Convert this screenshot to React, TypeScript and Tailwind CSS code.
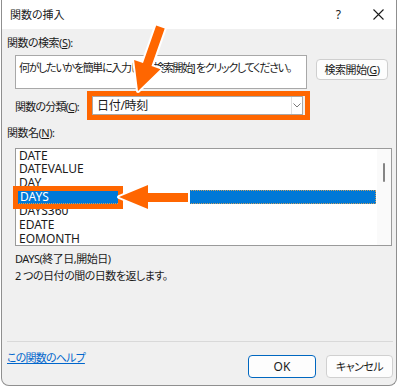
import React from "react";

const items = ["DATE", "DATEVALUE", "DAY", "DAYS", "DAYS360", "EDATE", "EOMONTH"];

export default function App() {
  return (
    <div className="relative w-[400px] h-[387px] bg-white overflow-hidden font-['Noto_Sans','Noto_Sans_CJK_JP',sans-serif] [font-feature-settings:'palt'] text-[11px] tracking-[-0.5px] text-[#1b1b1b]">
      <div className="ml-[1px] w-[396px] h-[386px] border-x border-b border-[#8f8f8f] rounded-b-[8px] bg-[#f0f0f0] flex flex-col overflow-hidden">
        {/* title bar */}
        <div className="h-[29px] bg-white flex items-center pl-[8px] pr-[8px] shrink-0">
          <span className="text-[11px] leading-[16px] tracking-normal">関数の挿入</span>
          <div className="ml-auto w-[20px] h-[20px] flex items-center justify-center text-[12px] leading-[16px]">?</div>
          <div className="ml-[20px] w-[20px] h-[20px] flex items-center justify-center">
            <svg width="11" height="11" viewBox="0 0 11 11">
              <path d="M0.5 0.5 L10.5 10.5 M10.5 0.5 L0.5 10.5" stroke="#1b1b1b" strokeWidth="1.1" fill="none" />
            </svg>
          </div>
        </div>
        {/* body */}
        <div className="flex flex-col pl-[5px] pr-[3px]">
          <div className="mt-[6px] leading-[16px]">
            関数の検索(<span className="underline">S</span>):
          </div>
          <div className="mt-[4px] flex items-start">
            <div className="ml-[8px] w-[292px] h-[34px] bg-white border border-[#a8a8a8] pl-[3px] pt-[4px] leading-[16px] whitespace-nowrap overflow-hidden tracking-[-1.3px]">
              何がしたいかを簡単に入力して、[検索開始] をクリックしてください。
            </div>
            <div className="ml-[9px] mt-[4px] w-[72px] h-[21px] bg-[#fdfdfd] border border-[#cfcfcf] rounded-[4px] flex items-center justify-center leading-[16px]">
              検索開始(<span className="underline">G</span>)
            </div>
          </div>
          <div className="mt-[7px] ml-[8px] h-[19px] flex items-center">
            <div className="w-[77px] leading-[16px] mt-[2px] whitespace-nowrap tracking-[-0.8px]">
              関数の分類(<span className="underline">C</span>):
            </div>
            <div className="w-[211px] h-[19px] bg-white border border-[#a8a8a8] flex items-center pl-[4px]">
              <span className="leading-[16px] text-[12px] tracking-[-0.3px]">日付/時刻</span>
              <div className="ml-auto h-full w-[11px] border-l border-[#e0e0e0] flex items-center justify-center">
                <svg width="8" height="5" viewBox="0 0 8 5">
                  <path d="M0.5 0.5 L4 4 L7.5 0.5" stroke="#7a7a7a" strokeWidth="1" fill="none" />
                </svg>
              </div>
            </div>
          </div>
          <div className="mt-[10px] leading-[16px]">
            関数名(<span className="underline">N</span>):
          </div>
          <div className="mt-[7px] ml-[8px] w-[377px] h-[98px] border border-[#9a9a9a] bg-white flex overflow-hidden text-[12px] tracking-normal">
            <div className="flex-1 flex flex-col">
              {items.map((it, i) =>
                it === "DAYS" ? (
                  <div key={it} className="mx-[1px] h-[14px] shrink-0 bg-[#0078d7] text-white pl-[2px] leading-[14px] border border-dotted border-[#c8a060]">
                    <span className="relative top-[-1px]">{it}</span>
                  </div>
                ) : (
                  <div key={it} className={`${i === 0 ? "h-[13px] leading-[13px]" : "h-[14px] leading-[14px]"} shrink-0 pl-[3px]`}>
                    {it}
                  </div>
                )
              )}
            </div>
            <div className="w-[14px] bg-[#fafafa] flex justify-center">
              <div className="mt-[14px] w-[2px] h-[19px] bg-[#858585] rounded-full" />
            </div>
          </div>
          <div className="mt-[4px] ml-[8px] leading-[17px]">DAYS(終了日,開始日)</div>
          <div className="ml-[8px] leading-[17px]">2 つの日付の間の日数を返します。</div>
          <div className="mt-[57px] h-px bg-[#d9d9d9]" />
          <div className="mt-[13px] flex items-start">
            <div className="mt-[-5px] leading-[16px] text-[#0066cc] underline tracking-[-0.8px]">この関数のヘルプ</div>
            <div className="ml-auto flex gap-[10px]">
              <div className="w-[68px] h-[23px] bg-[#fdfdfd] border border-[#0067c0] rounded-[4px] flex items-center justify-center leading-[16px] text-[12px] tracking-normal">
                OK
              </div>
              <div className="w-[67px] h-[23px] bg-[#fdfdfd] border border-[#d0d0d0] rounded-[4px] flex items-center justify-center leading-[16px]">
                キャンセル
              </div>
            </div>
          </div>
        </div>
      </div>
      {/* annotation overlay */}
      <svg className="absolute left-0 top-0 pointer-events-none" width="400" height="387" viewBox="0 0 400 387">
        <rect x="89.5" y="93.5" width="218" height="24" fill="none" stroke="#ff6600" strokeWidth="5" />
        <polygon
          points="138,91 160.5,69.2 151.5,66.1 164.7,28.5 156.2,25.5 143,63.1 134.1,60"
          fill="#ff6600"
          stroke="white"
          strokeWidth="4"
          strokeLinejoin="round"
          paintOrder="stroke"
        />
        <rect x="123" y="190" width="67" height="14" fill="white" />
        <rect x="15.5" y="188.5" width="105" height="18" fill="none" stroke="#ff6600" strokeWidth="5" />
        <polygon
          points="119,197 148,185 148,193 188,193 188,202 148,202 148,209"
          fill="#ff6600"
          stroke="white"
          strokeWidth="4"
          strokeLinejoin="round"
          paintOrder="stroke"
        />
      </svg>
    </div>
  );
}
